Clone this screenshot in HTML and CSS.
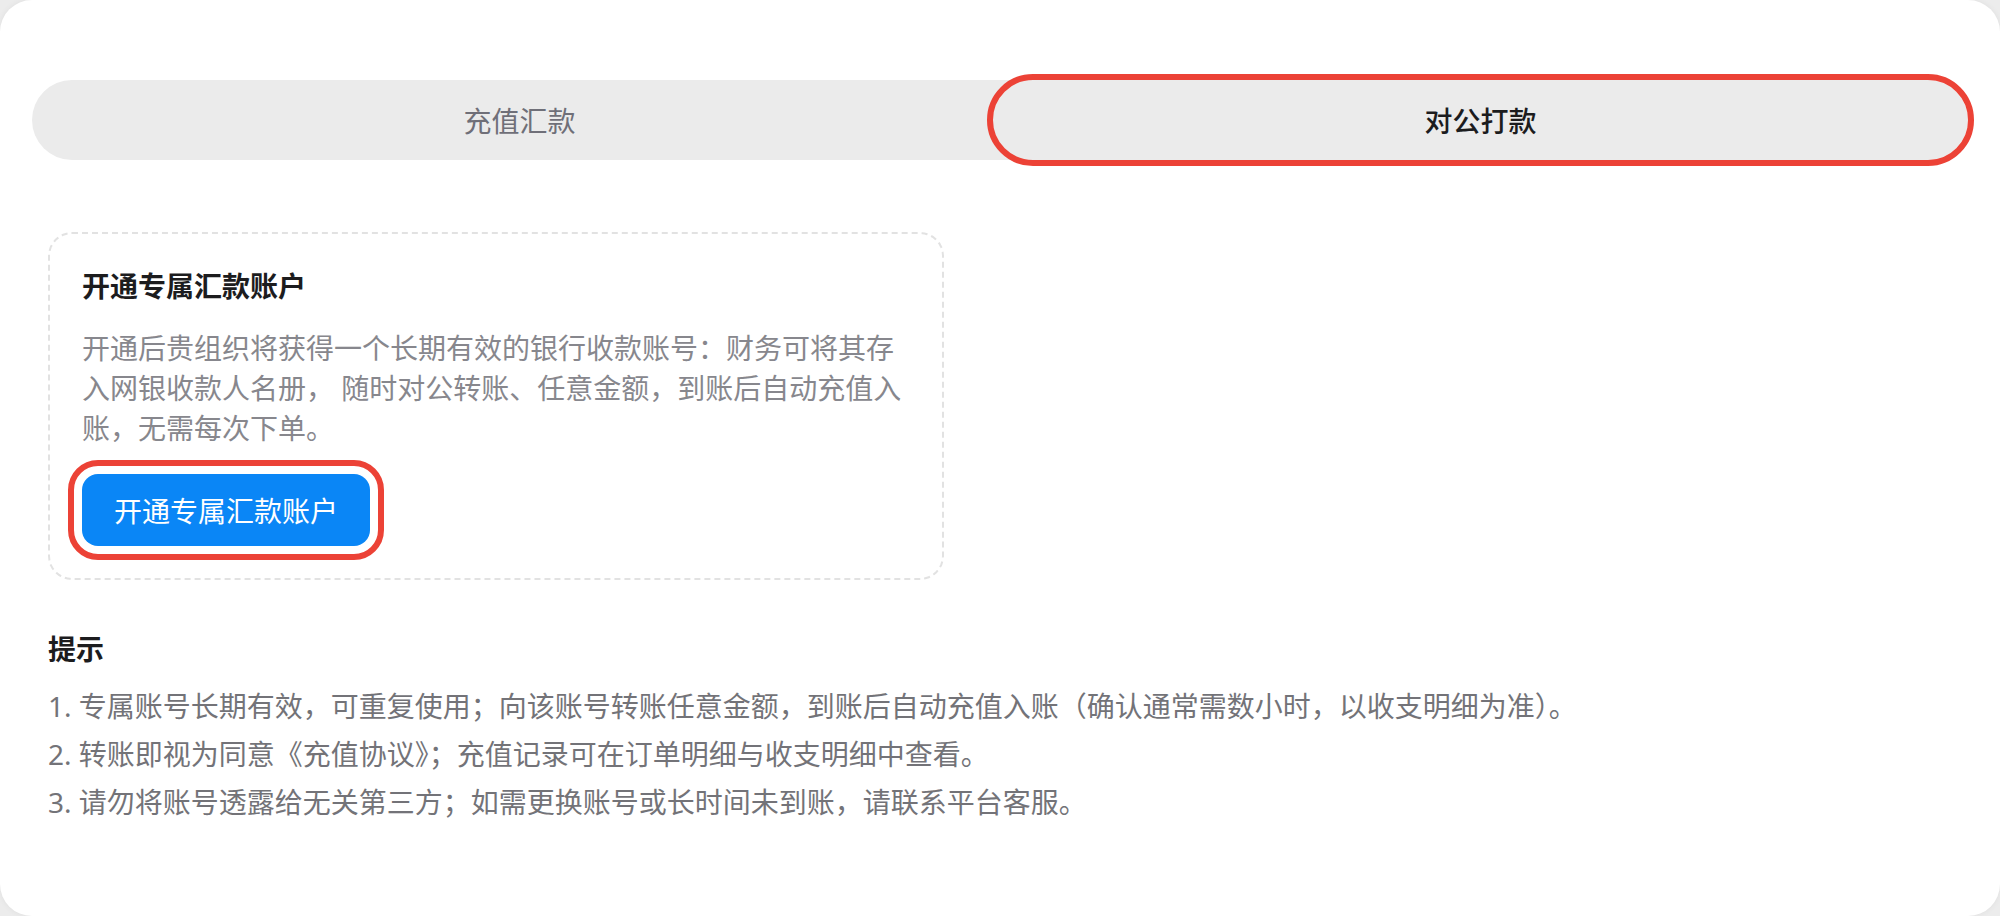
FILE: index.html
```html
<!DOCTYPE html>
<html lang="zh-CN">
<head>
  <meta charset="UTF-8" />
  <title>对公打款</title>
  <link rel="stylesheet" href="styles.css">
</head>
<body>
  <div class="page">
    <div class="tabs">
      <a class="tab" href="#recharge"><span>充值汇款</span></a>
      <a class="tab active" href="#corporate"><span>对公打款</span></a>
    </div>

    <div class="panel">
      <div class="open-card">
        <h3 class="open-title">开通专属汇款账户</h3>
        <p class="open-desc">开通后贵组织将获得一个长期有效的银行收款账号：财务可将其存入网银收款人名册， 随时对公转账、任意金额，到账后自动充值入账，无需每次下单。</p>
        <button class="open-btn" type="button">开通专属汇款账户</button>
      </div>

      <div class="tips">
        <h4 class="tips-title">提示</h4>
        <ol class="tips-list">
          <li>1. 专属账号长期有效，可重复使用；向该账号转账任意金额，到账后自动充值入账（确认通常需数小时，以收支明细为准）。</li>
          <li>2. 转账即视为同意《充值协议》；充值记录可在订单明细与收支明细中查看。</li>
          <li>3. 请勿将账号透露给无关第三方；如需更换账号或长时间未到账，请联系平台客服。</li>
        </ol>
      </div>
    </div>
  </div>
</body>
</html>
```

FILE: styles.css
```css
html, body {
  margin: 0;
  padding: 0;
  font-family: "Noto Sans", "Noto Sans CJK SC", sans-serif;
  background-color: #ececec;
}

.page {
  box-sizing: border-box;
  height: 916px;
  padding: 80px 32px 0;
  background: #fff;
  border-radius: 32px;
  box-shadow: 0 0 6px rgba(0, 0, 0, 0.06);
  overflow: hidden;
}

/* segmented switch */
.tabs {
  display: flex;
  height: 80px;
  background-color: #ebebeb;
  border-radius: 40px;
}

.tab {
  flex: 1;
  display: flex;
  justify-content: center;
  align-items: center;
  padding-left: 14px;
  border-radius: 40px;
  text-decoration: none;
  color: #6f6f78;
  font-size: 28px;
}

.tab.active {
  flex: 0 0 975px;
  padding-left: 0;
  color: #1c1c1e;
  font-weight: 500;
  outline: 6px solid #ec4236;
  outline-offset: 0;
}

.panel {
  padding: 72px 16px 0;
}

.open-card {
  width: 896px;
  box-sizing: border-box;
  padding: 32px;
  border: 2px dashed #e2e2e2;
  border-radius: 24px;
}

.open-title {
  margin: 0 0 22px;
  font-size: 28px;
  line-height: 40px;
  font-weight: 600;
  color: #1c1c1e;
}

.open-desc {
  margin: 0 0 26px;
  font-size: 28px;
  line-height: 40px;
  color: #87878d;
}

.open-btn {
  height: 72px;
  padding: 0 32px;
  border: none;
  border-radius: 16px;
  background-color: #0a86f6;
  color: #fff;
  font-family: inherit;
  font-size: 28px;
  outline: 6px solid #ec4236;
  outline-offset: 8px;
  cursor: pointer;
}

.tips {
  margin-top: 49px;
}

.tips-title {
  margin: 0 0 13px;
  font-size: 28px;
  line-height: 40px;
  font-weight: 600;
  color: #1c1c1e;
}

.tips-list {
  margin: 0;
  padding: 0;
  list-style: none;
  font-size: 28px;
  line-height: 48px;
  color: #737378;
}
```
